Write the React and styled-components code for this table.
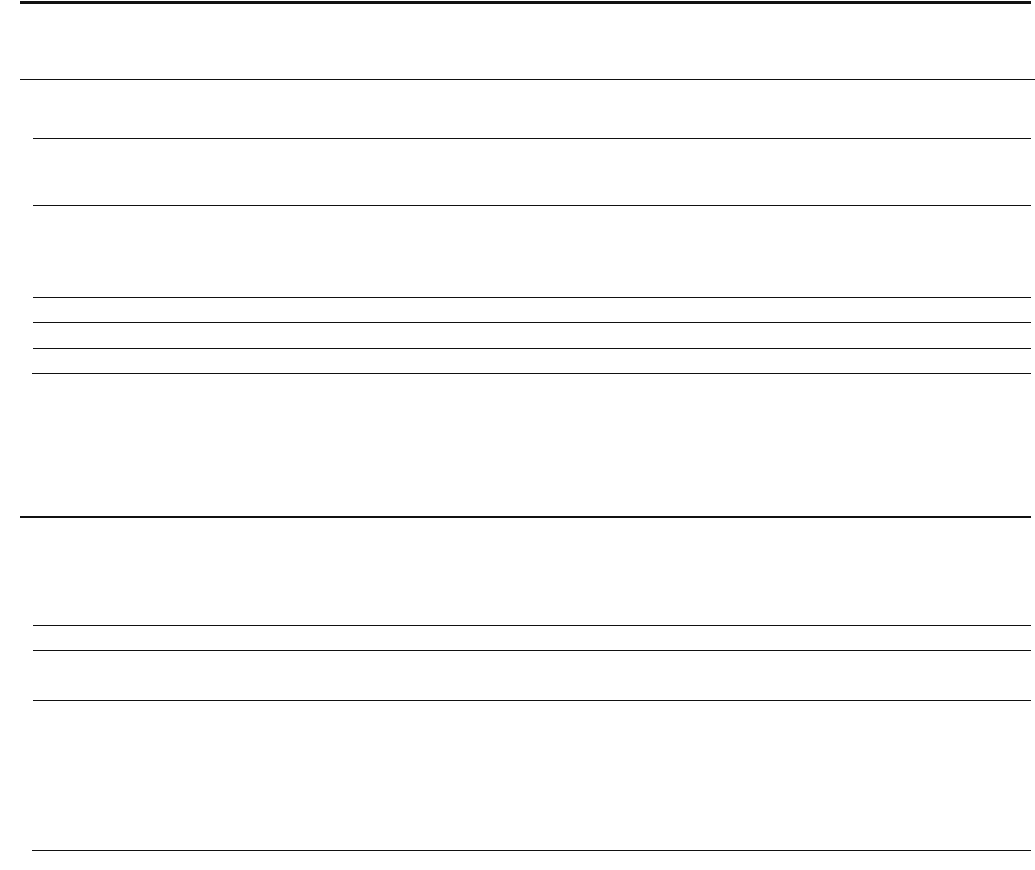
import React from "react";
import styled, { createGlobalStyle } from "styled-components";

const Global = createGlobalStyle`
  html, body { margin: 0; padding: 0; background: #fff; }
  body { font-family: "Liberation Sans", Arial, sans-serif; color: #111; }
`;

const Page = styled.div`
  display: flex;
  flex-direction: column;
  padding: 1px 4px 20px 20px;
  width: 1035px;
  box-sizing: border-box;
`;

const SectionHead = styled.div`
  border-top: ${(p) => p.$weight || 2}px solid #111;
  height: ${(p) => p.$h}px;
`;

const Row = styled.div`
  border-top: 1px solid #111;
  height: ${(p) => p.$h}px;
  margin-left: ${(p) => p.$inset || 0}px;
  margin-right: ${(p) => p.$right || 0}px;
`;

const Group = styled.div`
  display: flex;
  flex-direction: column;
  margin-left: 13px;
`;

export default function App() {
  return (
    <>
      <Global />
      <Page>
        <SectionHead $weight={3} $h={75} />
        <Row $h={58} $right={-4} />
        <Group>
          <Row $h={66} />
          <Row $h={91} />
          <Row $h={24} />
          <Row $h={25} />
          <Row $h={24} />
          <Row $h={142} $inset={-1} />
        </Group>
        <SectionHead $weight={2} $h={107} />
        <Group>
          <Row $h={24} />
          <Row $h={49} />
          <Row $h={149} />
          <Row $h={10} $inset={-1} />
        </Group>
      </Page>
    </>
  );
}
